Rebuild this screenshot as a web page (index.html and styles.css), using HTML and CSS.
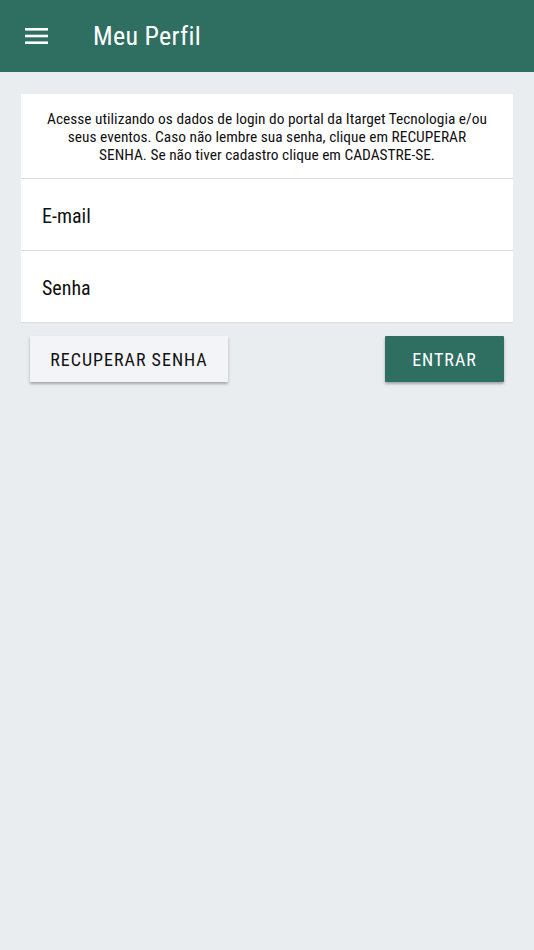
FILE: index.html
```html
<!DOCTYPE html>
<html lang="pt">
<head>
    <meta charset="UTF-8">
    <meta name="viewport" content="width=device-width, initial-scale=1.0">
    <title>Meu Perfil</title>
    <link rel="stylesheet" href="styles.css">
</head>
<body>
    <header class="toolbar">
        <button class="menu-btn" aria-label="Menu">
            <svg width="24" height="18" viewBox="0 0 24 18">
                <rect x="0" y="1" width="23" height="2.6" fill="#fff"/>
                <rect x="0" y="7.7" width="23" height="2.6" fill="#fff"/>
                <rect x="0" y="14.4" width="23" height="2.6" fill="#fff"/>
            </svg>
        </button>
        <h1 class="title">Meu Perfil</h1>
    </header>

    <main class="content">
        <div class="card">
            <p class="intro">Acesse utilizando os dados de login do portal da Itarget Tecnologia e/ou seus eventos. Caso não lembre sua senha, clique em RECUPERAR SENHA. Se não tiver cadastro clique em CADASTRE-SE.</p>
            <label class="field">
                <span class="field-label">E-mail</span>
            </label>
            <label class="field">
                <span class="field-label">Senha</span>
            </label>
        </div>

        <div class="actions">
            <button class="btn btn-light">RECUPERAR SENHA</button>
            <button class="btn btn-primary">ENTRAR</button>
        </div>
    </main>
</body>
</html>
```

FILE: styles.css
```css
body {
    margin: 0;
    background: #e9edf0;
    font-family: 'Roboto', 'Liberation Sans', sans-serif;
    font-stretch: condensed;
    color: #111;
    min-height: 950px;
}

.toolbar {
    height: 72px;
    background: #2e6f62;
    display: flex;
    align-items: center;
    padding: 0 0 0 25px;
}

.menu-btn {
    background: none;
    border: none;
    padding: 0;
    width: 24px;
    height: 18px;
    display: flex;
    margin-top: -1px;
}

.title {
    margin: 0 0 0 44px;
    color: #fff;
    font-size: 26px;
    font-weight: 400;
    letter-spacing: 0.3px;
}

.content {
    padding: 22px 21px 0 21px;
}

.card {
    background: #fff;
}

.intro {
    margin: 0;
    padding: 16px 24px 14px;
    text-align: center;
    font-size: 15.4px;
    line-height: 18px;
    border-bottom: 1px solid #dcdcdc;
}

.field {
    display: flex;
    align-items: center;
    height: 71px;
    padding: 0 21px;
    border-bottom: 1px solid #dcdcdc;
}

.field-label {
    font-size: 20px;
    margin-top: 2px;
}

.actions {
    display: flex;
    justify-content: space-between;
    padding: 13px 9px 0 9px;
}

.btn {
    font-family: inherit;
    font-stretch: condensed;
    font-size: 18px;
    letter-spacing: 1px;
    height: 46px;
    padding: 0 20px;
    border: none;
    border-radius: 1px;
    box-shadow: 0 2px 3px rgba(0, 0, 0, 0.3);
}

.btn-light {
    background: #f3f4f8;
    color: #111;
    width: 198px;
}

.btn-primary {
    background: #2e6f62;
    color: #fff;
    width: 119px;
}
```
